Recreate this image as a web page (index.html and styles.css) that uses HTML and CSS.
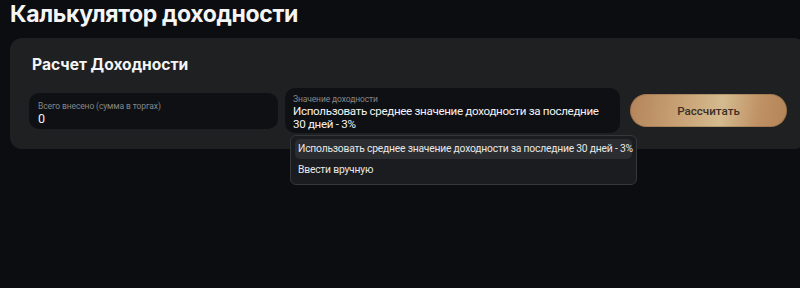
FILE: index.html
```html
<!DOCTYPE html>
<html lang="ru">
<head>
<meta charset="utf-8">
<link rel="stylesheet" href="styles.css">
</head>
<body>
<div class="page">
  <h1 class="title">Калькулятор доходности</h1>
  <section class="card">
    <h2 class="card-title">Расчет Доходности</h2>
    <div class="row">
      <div class="field field-sum">
        <div class="label">Всего внесено (сумма в торгах)</div>
        <div class="value">0</div>
      </div>
      <div class="select-wrap">
        <div class="field field-select">
          <div class="label">Значение доходности</div>
          <div class="value">Использовать среднее значение доходности за последние 30 дней - 3%</div>
        </div>
        <div class="menu">
          <div class="option active">Использовать среднее значение доходности за последние 30 дней - 3%</div>
          <div class="option">Ввести вручную</div>
        </div>
      </div>
      <button class="btn">Рассчитать</button>
    </div>
  </section>
</div>
</body>
</html>
```
FILE: styles.css
```css
html {
  background: #0b0d10;
}
body {
  margin: 0;
  padding: 0;
  background: #0b0d10;
  font-family: Roboto, "Noto Sans", sans-serif;
  color: #f2f2f2;
}
.page {
  padding: 0 0 0 10px;
  width: 790px;
  height: 288px;
  overflow: hidden;
}
.title {
  margin: 0;
  font-family: Inter, "Noto Sans", sans-serif;
  font-size: 23px;
  line-height: 28px;
  font-weight: 700;
  letter-spacing: -0.35px;
  color: #f5f5f5;
}
.card {
  margin-top: 10px;
  width: 796px;
  box-sizing: border-box;
  background: #1e2022;
  border-radius: 12px;
  padding: 17px 19px 16px 19px;
}
.card-title {
  margin: 0 0 13px 3px;
  font-family: Inter, "Noto Sans", sans-serif;
  font-size: 15.6px;
  line-height: 20px;
  font-weight: 700;
  color: #f5f5f5;
}
.row {
  display: flex;
  align-items: center;
}
.field {
  background: #0e1013;
  border-radius: 10px;
  box-sizing: border-box;
}
.field-sum {
  width: 249px;
  height: 36px;
  padding: 8px 9px;
  margin-right: 7px;
}
.label {
  font-size: 8.5px;
  line-height: 10px;
  letter-spacing: -0.12px;
  color: #85878a;
}
.value {
  font-size: 11.6px;
  line-height: 13px;
  letter-spacing: -0.32px;
  color: #f3f3f3;
}
.field-sum .value { margin-top: 1px; font-size: 12.5px; letter-spacing: 0; }
.select-wrap {
  position: relative;
  width: 335px;
  margin-right: 10px;
}
.field-select {
  height: 45px;
  padding: 6px 8px;
}
.field-select .value { margin-top: 1px; }
.menu {
  position: absolute;
  left: 5px;
  top: 47px;
  width: 347px;
  box-sizing: border-box;
  background: #1a1c1f;
  border: 1px solid #35373a;
  border-radius: 6px;
  padding: 3px 4px 4px 4px;
}
.option {
  font-size: 10.3px;
  line-height: 20px;
  letter-spacing: -0.2px;
  padding: 0 3px;
  border-radius: 5px;
  color: #e8e8e8;
  white-space: nowrap;
}
.option + .option { margin-top: 1px; }
.option.active { background: #2b2d30; }
.btn {
  width: 157px;
  height: 33px;
  border: none;
  border-radius: 17px;
  background: linear-gradient(100deg, #b4845a 0%, #c9a477 35%, #d4bb8f 58%, #bf9063 82%, #b38457 100%);
  box-shadow: inset 0 0 0 1px rgba(90,60,30,0.25);
  font-family: Roboto, "Noto Sans", sans-serif;
  font-size: 11.6px;
  font-weight: 500;
  color: #3b2f26;
  padding: 0;
}
```
